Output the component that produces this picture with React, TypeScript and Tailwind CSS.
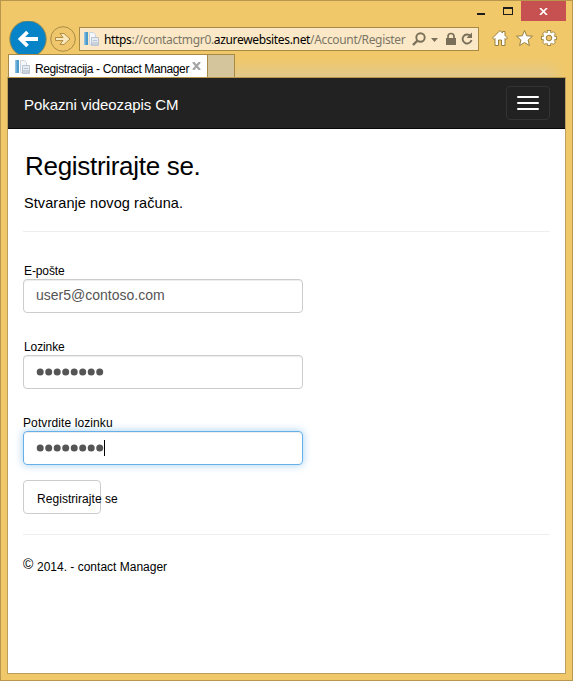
import React from "react";

function PageIcon() {
  return (
    <svg width="16" height="16" viewBox="0 0 16 16" className="block shrink-0">
      <rect x="0" y="1" width="4" height="13" fill="#4d9bcb" />
      <rect x="0" y="1" width="1.500" height="13" fill="#8cc3e2" />
      <path d="M5.500 1.500h4l2 2v10h-6z" fill="#f4f6f9" stroke="#ccd4df" />
      <path d="M7.500 6.500h7v8h-7z" fill="#e6eaf1" stroke="#bac4d2" />
      <path d="M9 9.500h4" stroke="#b7c3d6" />
      <path d="M8 11h6v3H8z" fill="#c8d0dc" />
    </svg>
  );
}

function TitleBar() {
  return (
    <div className="flex h-5 justify-end">
      <svg width="44" height="20" viewBox="0 0 44 20" className="block">
        <rect x="0" y="12" width="8" height="2" fill="#1c1c1c" />
        <path d="M26 6h10v8H26zM27 8v5h8V8z" fill="#1c1c1c" fillRule="evenodd" />
      </svg>
      <div className="flex h-5 w-[45px] items-center justify-center bg-[#c75050]">
        <svg width="9" height="7" viewBox="0 0 9 7" className="mt-px">
          <path d="M1 0l7 7M8 0L1 7" stroke="#fff" strokeWidth="1.700" />
        </svg>
      </div>
    </div>
  );
}

function Toolbar() {
  return (
    <div className="flex h-[33px]">
      <svg width="72" height="38" viewBox="0 0 72 38" className="block shrink-0">
        <circle cx="21" cy="18" r="18.200" fill="#0784c8" stroke="#94894f" />
        <path d="M31 18H14.500M20.500 11L13.500 18l7 7" fill="none" stroke="#fff" strokeWidth="3.800" />
        <circle cx="56" cy="18" r="12.300" fill="#efc66b" stroke="#a98a45" />
        <path d="M48.500 16.500h7.500l-3-4h4l6 5.500-6 5.500h-4l3-4h-7.500z" fill="#fae8bd" stroke="#b28f45" />
      </svg>
      <div className="mt-[6px] flex h-6 w-[400px] shrink-0 items-center border border-[#a98a45] bg-[#fae8c6] pl-[4px]">
        <PageIcon />
        <div className="ml-1 w-[302px] whitespace-nowrap pt-[2px] font-['Noto_Sans','Open_Sans',sans-serif] text-[12px] leading-[18px] tracking-[-0.340px] text-[#7c7666]">
          <span className="text-black">https</span>://contactmgr0.<span className="text-black">azurewebsites.net</span>/Account/Register
        </div>
        <svg width="68" height="22" viewBox="0 0 68 22" className="ml-[4px] block shrink-0">
          <circle cx="10.500" cy="9.500" r="4.200" fill="none" stroke="#7a705a" strokeWidth="1.900" />
          <path d="M7.500 12.500L3 17" stroke="#7a705a" strokeWidth="2.400" />
          <path d="M21 10h7l-3.500 4z" fill="#7a705a" />
          <path d="M36 10h10v7H36z" fill="#7a705a" />
          <path d="M38 10V8.500a3 3 0 0 1 6 0V10" fill="none" stroke="#7a705a" strokeWidth="1.700" />
          <path d="M60.500 8A4.500 4.500 0 1 0 61.500 12" fill="none" stroke="#7a705a" strokeWidth="1.900" />
          <path d="M62 4.500v5.500h-5.500z" fill="#7a705a" />
        </svg>
      </div>
      <svg width="70" height="22" viewBox="0 0 70 22" className="ml-3 mt-[6px] block shrink-0">
        <path d="M1.500 11L9 3.500l2.500 2.500V4.500h2.500v4l2.500 2.500-1.500 1.500-1-1V18.500H10.500V13h-3v5.500H4v-7l-1 1z" fill="#fff" stroke="#98803f" />
        <path d="M33.500 3.500l2.200 5.300 5.800.4-4.400 3.800 1.300 5.500-4.900-3-4.900 3 1.300-5.500-4.400-3.800 5.800-.4z" fill="#fff" stroke="#98803f" />
        <g transform="translate(58 11)">
          <g fill="#fff" stroke="#98803f" strokeWidth=".9">
            {[0, 45, 90, 135, 180, 225, 270, 315].map((angle) => (
              <rect key={angle} x="-1.700" y="-7.500" width="3.400" height="4" transform={"rotate(" + angle + ")"} />
            ))}
          </g>
          <circle r="5.500" fill="#fff" />
          <circle r="2.800" fill="#efc66b" stroke="#98803f" />
        </g>
      </svg>
    </div>
  );
}

function TabStrip() {
  return (
    <div className="relative flex h-6 border-b border-[#b8964c] bg-linear-to-b from-[#f0c869] from-20% to-[#e2c88a] pl-px">
      <div className="flex w-[200px] items-center border border-b-0 border-[#a98a45] bg-white pl-[6px] pt-px">
        <PageIcon />
        <span className="ml-[4px] w-[155px] whitespace-nowrap pt-[4px] text-[12px] leading-4 tracking-[-0.380px] text-black">Registracija - Contact Manager</span>
        <svg width="9" height="8" viewBox="0 0 9 8" className="mb-px ml-[2px]">
          <path d="M1 0l7 8M8 0L1 8" stroke="#a5a5a5" strokeWidth="2.200" />
        </svg>
      </div>
      <div className="w-[27px] border border-b-0 border-l-0 border-[#a98a45] bg-[#d5c59c]" />
      <div className="ml-auto w-5 bg-linear-to-r from-transparent to-[#f0c869]" />
    </div>
  );
}

function PasswordDots() {
  return (
    <svg width="68" height="8" viewBox="0 0 68 8" className="block">
      {[0, 1, 2, 3, 4, 5, 6, 7].map((i) => (
        <circle key={i} cx={4.200 + i * 8.500} cy="4" r="3.500" fill="#555" />
      ))}
    </svg>
  );
}

const field = "flex h-[34px] w-[280px] items-center rounded-[4px] border pl-3";

export default function App() {
  return (
    <div className="flex h-[681px] w-[573px] flex-col border border-[#b8964c] bg-[#f0c869] px-[6px] pb-[6px] font-['Liberation_Sans',Arial,sans-serif] text-black">
      <TitleBar />
      <Toolbar />
      <TabStrip />
      <div className="flex-1 border border-t-0 border-[#b8a05c] bg-white">
        <nav className="flex h-[51px] items-center justify-between border-b border-[#080808] bg-[#222] pl-4 pr-[15px]">
          <span className="pt-[4px] text-[15px] tracking-[-0.070px] text-white">Pokazni videozapis CM</span>
          <button className="flex h-[34px] w-11 flex-col items-center justify-center gap-1 rounded-[4px] border border-[#333]">
            <span className="h-0.5 w-[22px] rounded-[1px] bg-white" />
            <span className="h-0.5 w-[22px] rounded-[1px] bg-white" />
            <span className="h-0.5 w-[22px] rounded-[1px] bg-white" />
          </button>
        </nav>
        <main className="px-[15px]">
          <h1 className="ml-[2px] pt-[21px] text-[26px] leading-8 tracking-[-0.300px]">Registrirajte se.</h1>
          <p className="ml-px mt-[11px] text-[14.500px] leading-5 tracking-[0.080px]">Stvaranje novog računa.</p>
          <hr className="mt-[18px] border-[#eee]" />
          <div className="pt-[31px]">
            <label className="ml-px block h-4 text-[12px] leading-4 tracking-[-0.100px]">E-pošte</label>
            <div className={field + " border-[#ccc] text-[14px] text-[#555] shadow-[inset_0_1px_1px_rgba(0,0,0,0.075)]"}>
              <span className="pb-px">user5@contoso.com</span>
            </div>
          </div>
          <div className="pt-[26px]">
            <label className="ml-px block h-4 text-[12px] leading-4 tracking-[-0.100px]">Lozinke</label>
            <div className={field + " border-[#ccc] shadow-[inset_0_1px_1px_rgba(0,0,0,0.075)]"}>
              <PasswordDots />
            </div>
          </div>
          <div className="pt-[26px]">
            <label className="block h-4 text-[12px] leading-4 tracking-[0.100px]">Potvrdite lozinku</label>
            <div className={field + " border-[#66afe9] shadow-[inset_0_1px_1px_rgba(0,0,0,0.075),0_0_8px_rgba(102,175,233,0.6)]"}>
              <PasswordDots />
              <span className="h-4 w-px bg-black" />
            </div>
          </div>
          <button className="mt-[15px] flex h-[34px] w-[78px] items-center whitespace-nowrap rounded-[4px] border border-[#ccc] pl-[13px] pt-1 text-[12px] tracking-[0.050px]">Registrirajte se</button>
          <hr className="mt-5 border-[#eee]" />
          <footer className="flex pt-[21px] text-[12px] leading-5">
            <span className="w-[14px] text-[14px] leading-4">©</span>
            <span className="whitespace-nowrap pt-px">2014. - contact Manager</span>
          </footer>
        </main>
      </div>
    </div>
  );
}
